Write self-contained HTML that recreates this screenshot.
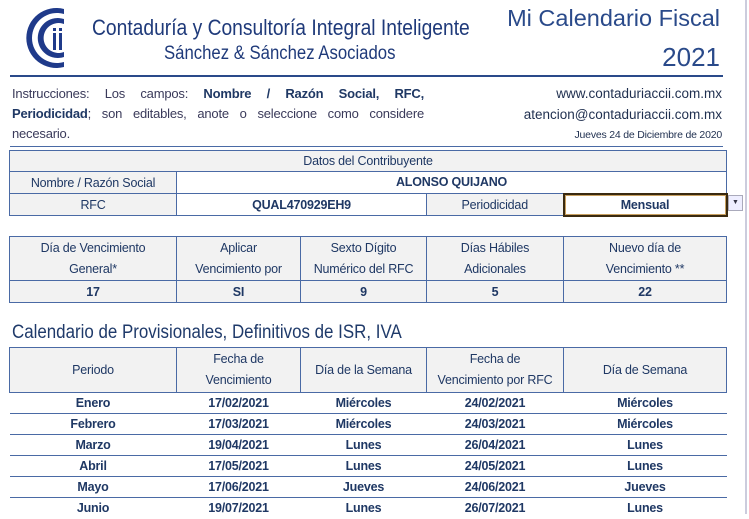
<!DOCTYPE html>
<html><head><meta charset="utf-8"><style>
*{margin:0;padding:0;box-sizing:border-box}
body{width:749px;height:514px;background:#fff;position:relative;overflow:hidden;font-family:"Liberation Sans",sans-serif;color:#1f3864}
.a{position:absolute}
.n{transform-origin:left top;white-space:nowrap}
.j{text-align:justify;text-align-last:justify;white-space:nowrap;height:20px}
table{border-collapse:collapse;position:absolute;table-layout:fixed}
td{text-align:center;font-size:12.5px;padding:0;overflow:hidden;white-space:nowrap;letter-spacing:-0.2px}
.g td{border:1.5px solid #4a6aa5}
.h{background:#f2f2f2}
.b{font-weight:bold}
</style></head><body>
<svg class="a" style="left:24px;top:6px" width="44" height="64" viewBox="0 0 44 64">
<path d="M40 3 A30 30 0 1 0 40 61 L40 56 A25 25 0 1 1 40 8 Z" fill="#1f3a8a"/>
<path d="M40 13 A20 20 0 1 0 40 51 L40 46 A15 15 0 1 1 40 18 Z" fill="#1f3a8a"/>
<rect x="29" y="27" width="3" height="17" fill="#1f3a8a"/><rect x="29" y="22" width="3" height="3" fill="#1f3a8a"/>
<rect x="35" y="27" width="3" height="17" fill="#1f3a8a"/><rect x="35" y="22" width="3" height="3" fill="#1f3a8a"/>
</svg>
<div class="a n" style="left:92px;top:15px;font-size:22px;color:#1f3a7a;transform:scaleX(0.875)">Contaduría y Consultoría Integral Inteligente</div>
<div class="a n" style="left:164px;top:43px;font-size:19px;color:#1f3a7a;transform:scaleX(0.88)">Sánchez &amp; Sánchez Asociados</div>
<div class="a" style="left:480px;top:5px;width:240px;text-align:right;font-size:23.5px;color:#2a4a8a;white-space:nowrap">Mi Calendario Fiscal</div>
<div class="a" style="left:600px;top:42px;width:120px;text-align:right;font-size:26px;color:#2a4a8a">2021</div>
<div class="a" style="left:10px;top:75px;width:713px;height:2px;background:#2a4a8a"></div>
<div class="a" style="left:12px;top:84px;width:412px;line-height:20px;color:#3a3a5a;font-size:13px;letter-spacing:-0.2px">
<div class="j">Instrucciones: Los campos: <b style="color:#1f3864">Nombre / Razón Social, RFC,</b></div>
<div class="j"><b style="color:#1f3864">Periodicidad</b>; son editables, anote o seleccione como considere</div>
<div>necesario.</div></div>
<div class="a" style="left:480px;top:86px;width:242px;text-align:right;font-size:13.5px;color:#1f2f4f">www.contaduriaccii.com.mx</div>
<div class="a" style="left:470px;top:107px;width:252px;text-align:right;font-size:13.5px;color:#1f2f4f">atencion@contaduriaccii.com.mx</div>
<div class="a" style="left:520px;top:129px;width:202px;text-align:right;font-size:10.5px;color:#1f2f4f;letter-spacing:-0.2px">Jueves 24 de Diciembre de 2020</div>
<div class="a" style="left:10px;top:146px;width:713px;height:1px;background:#4a6aa5"></div>
<div class="a" style="left:745px;top:0;width:2px;height:514px;background:#ccd"></div>

<table class="g" style="left:9px;top:150px;width:717px">
<colgroup><col style="width:167px"><col style="width:250px"><col style="width:137px"><col style="width:163px"></colgroup>
<tr style="height:21px" class="h"><td colspan="4">Datos del Contribuyente</td></tr>
<tr style="height:22px"><td class="h">Nombre / Razón Social</td><td colspan="3" class="b">ALONSO QUIJANO</td></tr>
<tr style="height:22px"><td class="h">RFC</td><td class="b">QUAL470929EH9</td><td class="h">Periodicidad</td><td class="b" style="border:2px solid #3a2a10;box-shadow:inset 0 0 0 1px #c8a060">Mensual</td></tr>
</table>
<div class="a" style="left:728px;top:195px;width:15px;height:16px;border:1px solid #aab;background:#eef;font-size:7px;text-align:center;line-height:14px;color:#334">▼</div>

<table class="g" style="left:9px;top:236px;width:717px">
<colgroup><col style="width:167px"><col style="width:124px"><col style="width:126px"><col style="width:137px"><col style="width:163px"></colgroup>
<tr style="height:44px" class="h"><td style="line-height:21px">Día de Vencimiento<br>General*</td><td style="line-height:21px">Aplicar<br>Vencimiento por</td><td style="line-height:21px">Sexto Dígito<br>Numérico del RFC</td><td style="line-height:21px">Días Hábiles<br>Adicionales</td><td style="line-height:21px">Nuevo día de<br>Vencimiento **</td></tr>
<tr style="height:22px" class="h b"><td>17</td><td>SI</td><td>9</td><td>5</td><td>22</td></tr>
</table>

<div class="a n" style="left:12px;top:322px;font-size:19px;color:#1f3a6a;transform:scaleX(0.89)">Calendario de Provisionales, Definitivos de ISR, IVA</div>
<table style="left:9px;top:347px;width:717px">
<colgroup><col style="width:167px"><col style="width:124px"><col style="width:126px"><col style="width:137px"><col style="width:163px"></colgroup>
<tr style="height:45px" class="h g"><td>Periodo</td><td style="line-height:21px">Fecha de<br>Vencimiento</td><td>Día de la Semana</td><td style="line-height:21px">Fecha de<br>Vencimiento por RFC</td><td>Día de Semana</td></tr>
<tr style="height:21px;border-bottom:1.5px solid #4a6aa5" class="b"><td>Enero</td><td>17/02/2021</td><td>Miércoles</td><td>24/02/2021</td><td>Miércoles</td></tr>
<tr style="height:21px;border-bottom:1.5px solid #4a6aa5" class="b"><td>Febrero</td><td>17/03/2021</td><td>Miércoles</td><td>24/03/2021</td><td>Miércoles</td></tr>
<tr style="height:21px;border-bottom:1.5px solid #4a6aa5" class="b"><td>Marzo</td><td>19/04/2021</td><td>Lunes</td><td>26/04/2021</td><td>Lunes</td></tr>
<tr style="height:21px;border-bottom:1.5px solid #4a6aa5" class="b"><td>Abril</td><td>17/05/2021</td><td>Lunes</td><td>24/05/2021</td><td>Lunes</td></tr>
<tr style="height:21px;border-bottom:1.5px solid #4a6aa5" class="b"><td>Mayo</td><td>17/06/2021</td><td>Jueves</td><td>24/06/2021</td><td>Jueves</td></tr>
<tr style="height:21px" class="b"><td>Junio</td><td>19/07/2021</td><td>Lunes</td><td>26/07/2021</td><td>Lunes</td></tr>
</table>
</body></html>
